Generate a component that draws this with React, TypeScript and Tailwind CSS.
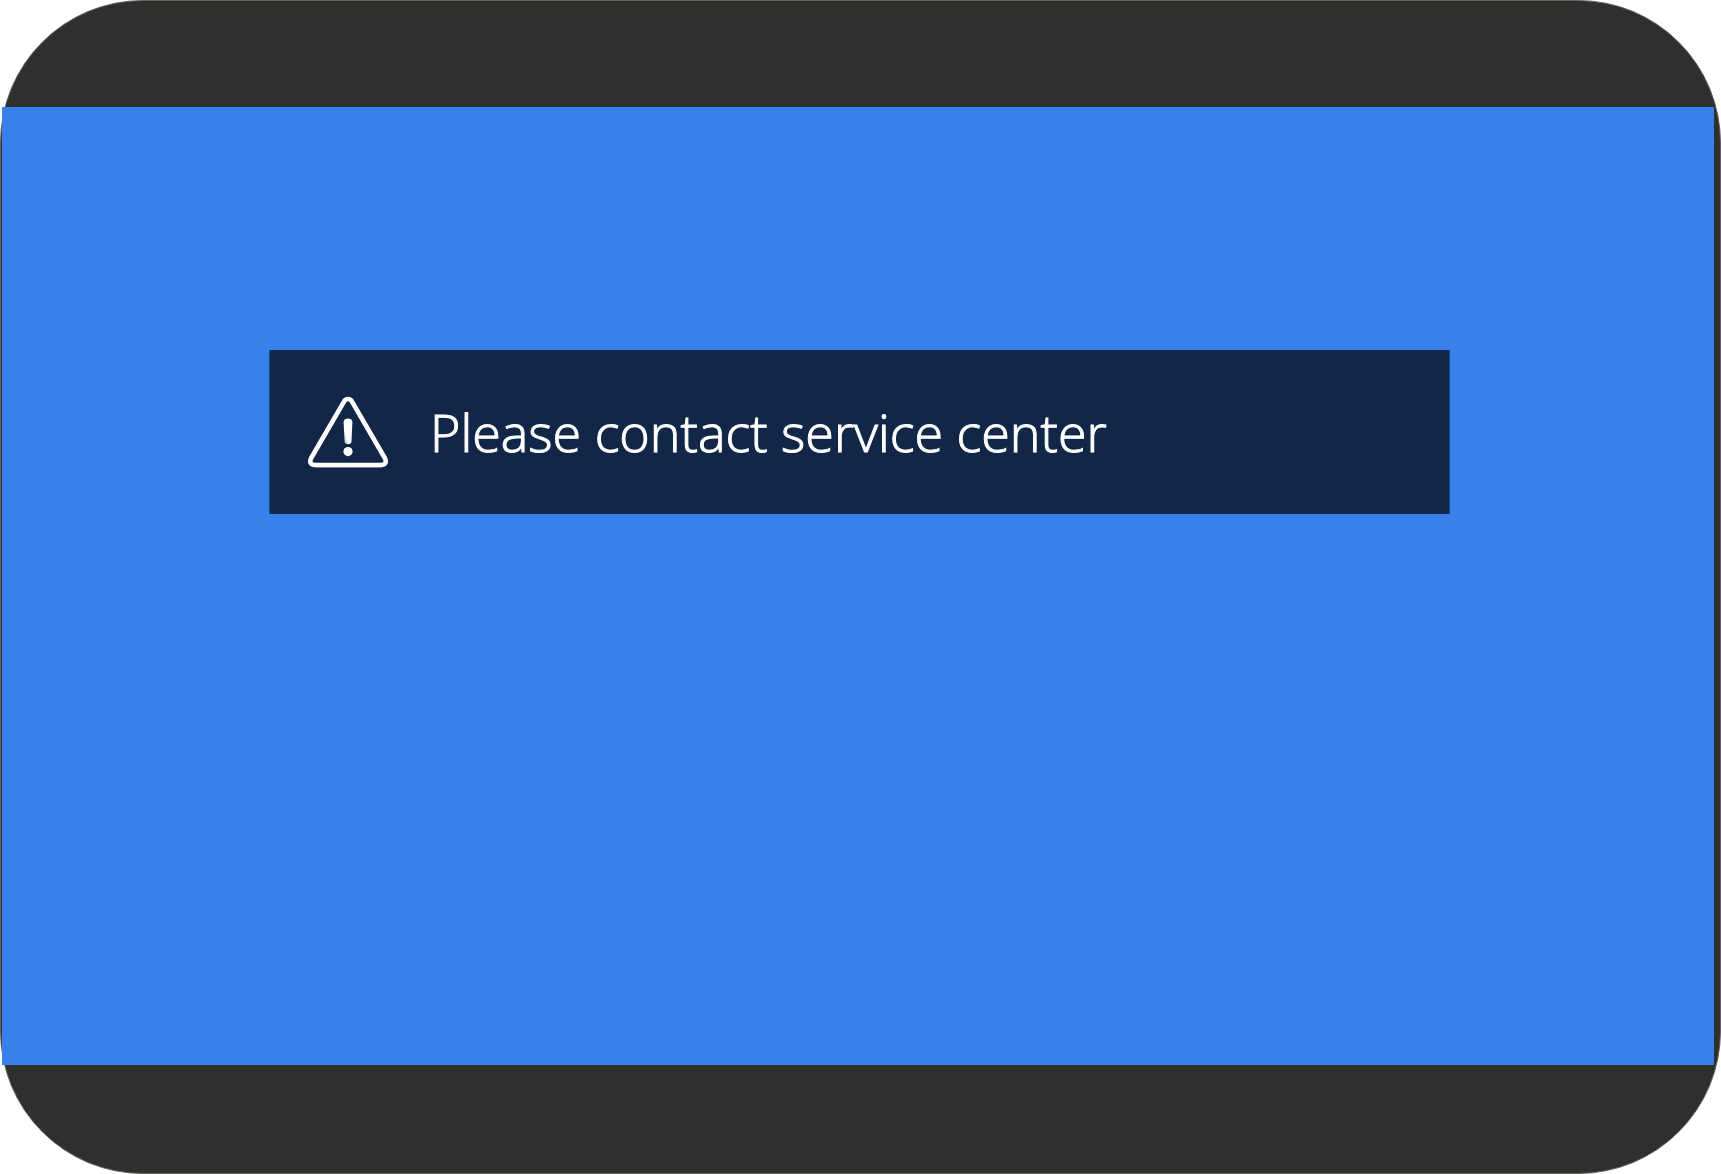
function WarningIcon() {
    return (
        <svg viewBox="0 0 80 72" className="h-[72px] w-20 shrink-0" fill="none" aria-hidden="true">
            <defs>
                <linearGradient id="mark" x1="34" y1="40" x2="38" y2="39" gradientUnits="userSpaceOnUse">
                    <stop offset="0" stopColor="#8a95a8" />
                    <stop offset="1" stopColor="#fff" />
                </linearGradient>
            </defs>
            <path d="M7 72H74" stroke="#4a5a76" strokeWidth="2" />
            <path
                d="M36 5.6 3.2 62C1 66 2.8 69 7 69H73C77.2 69 79 66 76.8 62L44 5.6C42.2 2.2 37.8 2.2 36 5.6Z"
                stroke="#fff"
                strokeWidth="4.6"
                strokeLinejoin="round"
            />
            <path
                d="M35.6 26C35.6 21.4 44.4 21.4 44.4 26L43.5 45.6C43.2 49.2 36.8 49.2 36.5 45.6Z"
                fill="url(#mark)"
            />
            <circle cx="40" cy="55.6" r="4.6" fill="#fff" />
        </svg>
    );
}

export default function App() {
    return (
        <main className="flex min-h-screen bg-white">
            {/* Bezel */}
            <div className="flex flex-1 flex-col rounded-[143px] border border-[#62625f] bg-[#2f2f2d] pt-[106px] pr-[6px] pb-[108px] pl-px">
                {/* Screen */}
                <section className="flex flex-1 flex-col bg-[#3880ec] pt-[243px] pr-[15.4%] pl-[15.6%]">
                    <div
                        role="alert"
                        className="flex h-[164px] items-center border-x border-[#1d4a8c] bg-[#122747] pl-[38px]"
                    >
                        <WarningIcon />
                        <p className="pl-[42px] font-['Open_Sans',sans-serif] text-[52px] leading-[60px] font-light whitespace-nowrap text-white [-webkit-text-stroke:1px_white]">
                            Please contact service center
                        </p>
                    </div>
                </section>
            </div>
        </main>
    );
}
